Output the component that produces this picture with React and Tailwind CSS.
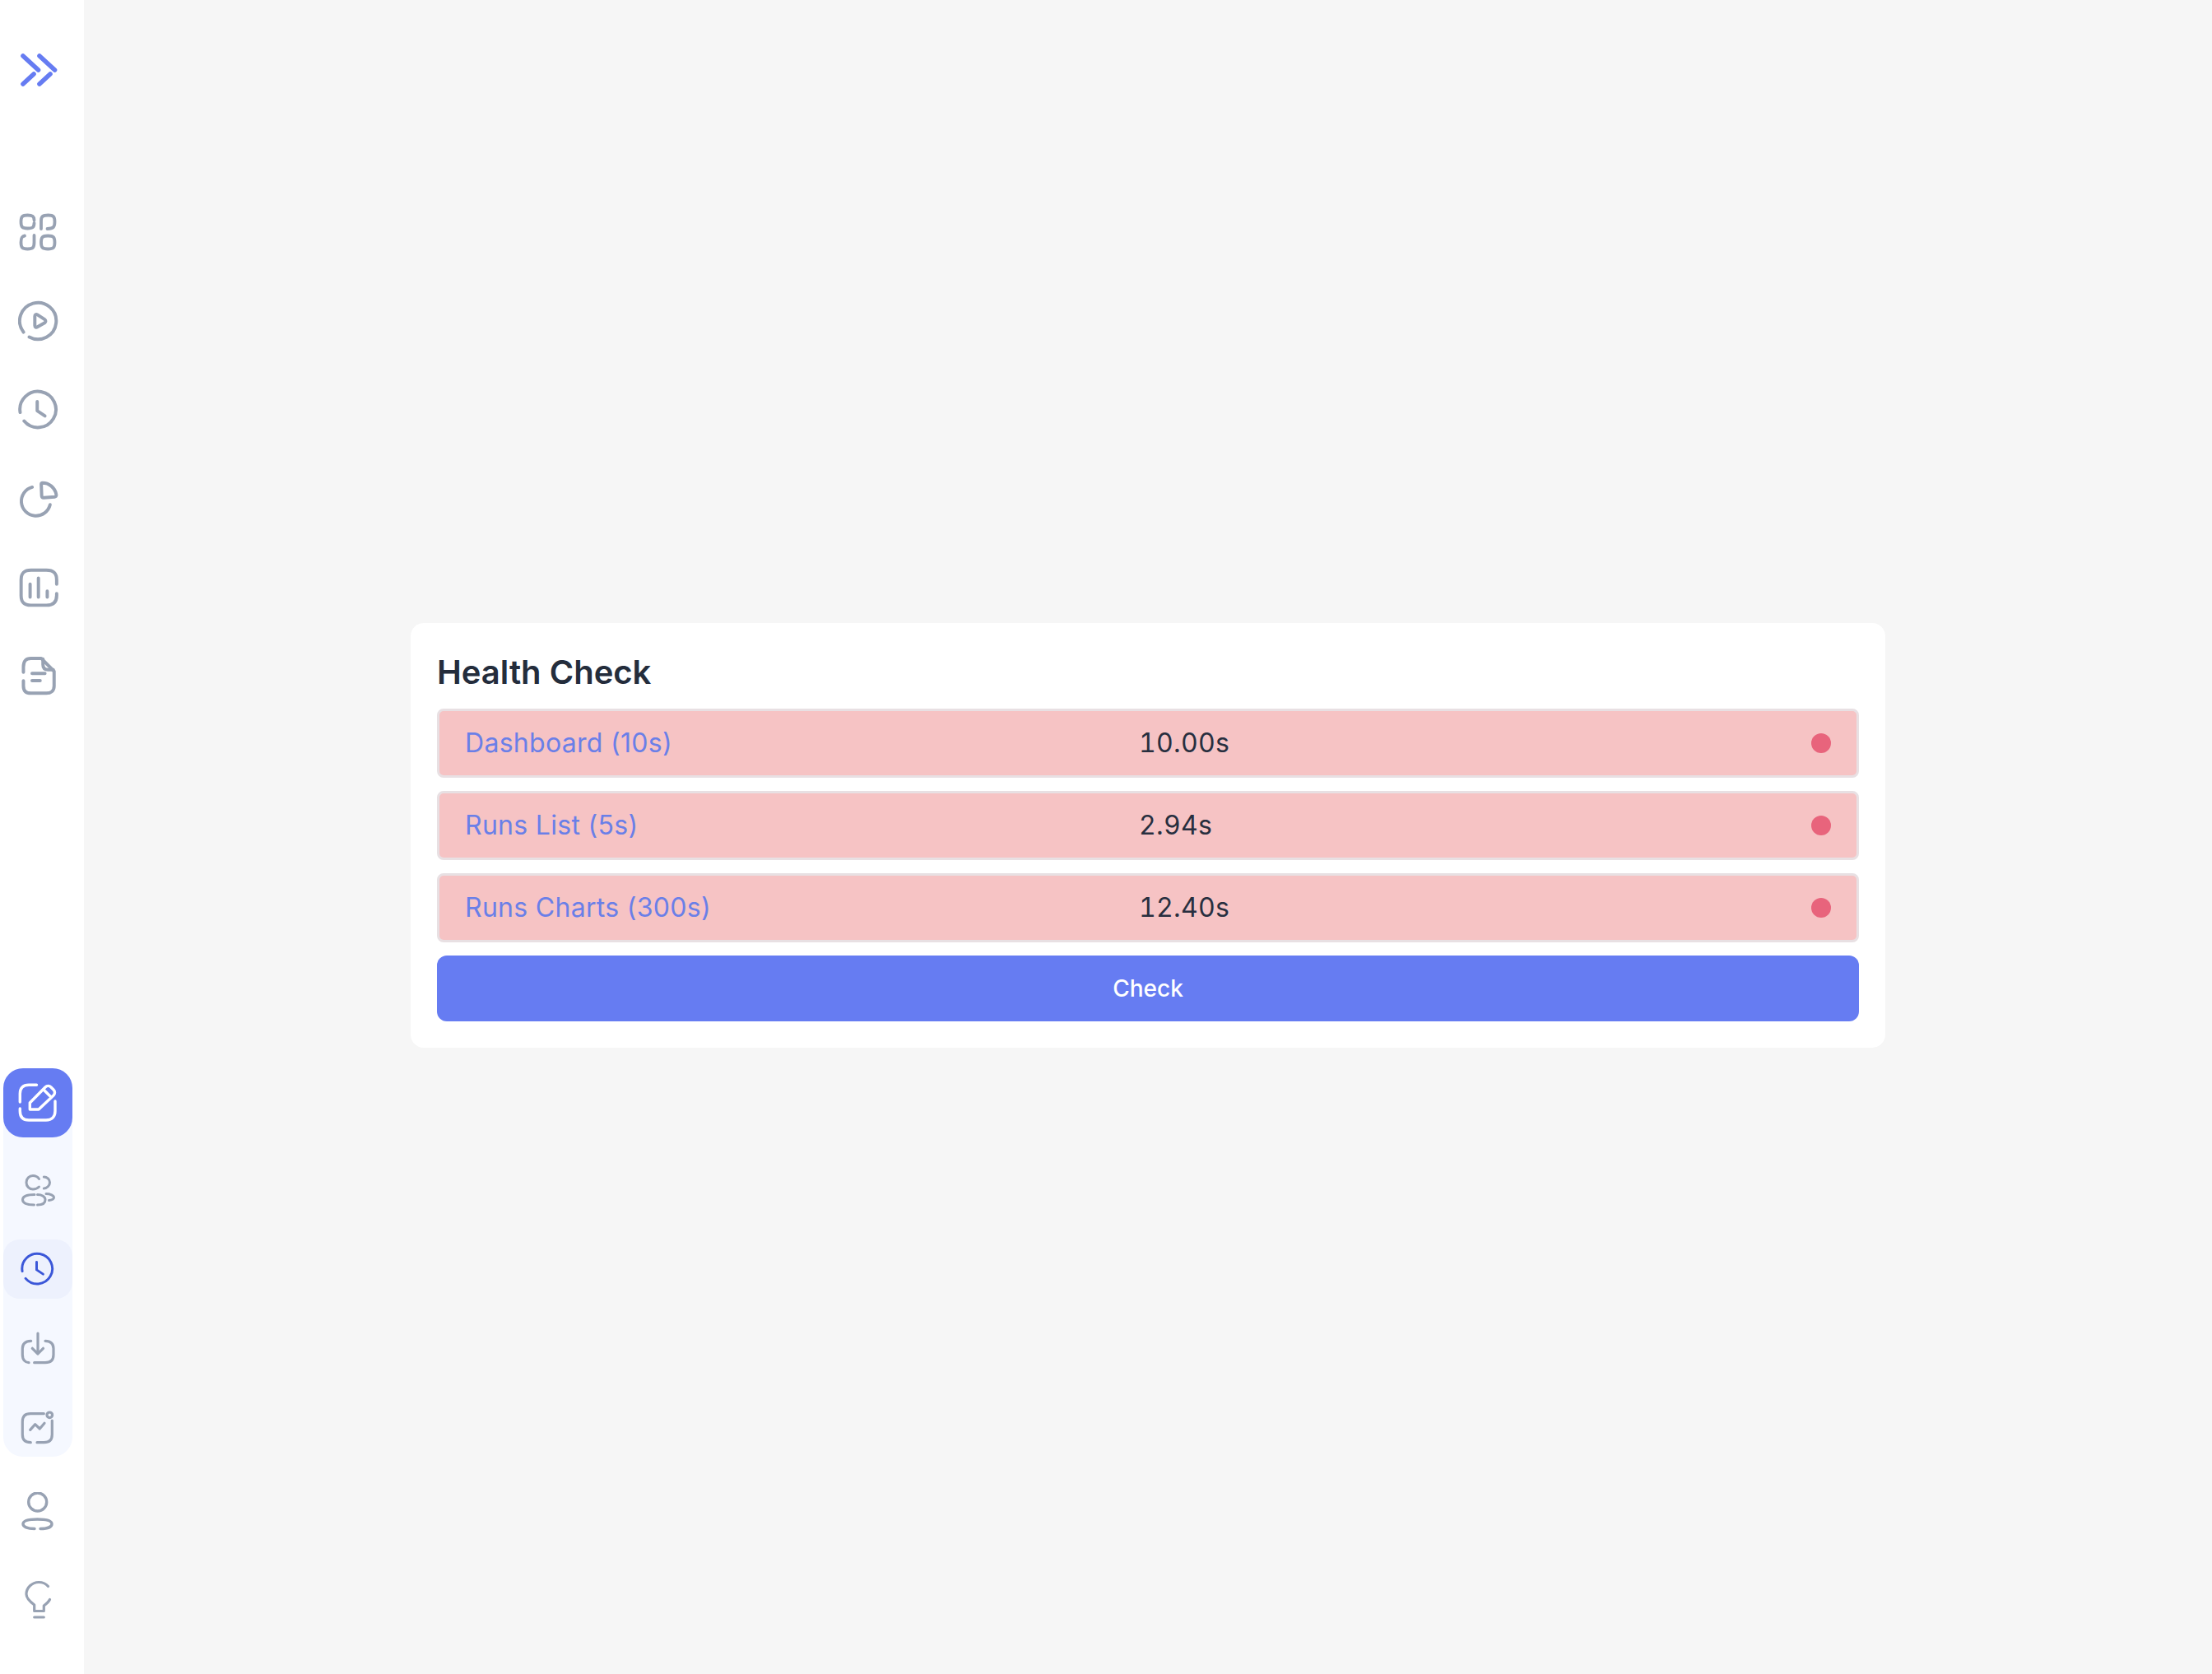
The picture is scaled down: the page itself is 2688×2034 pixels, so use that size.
import React from 'react';

const Icon = ({ className = 'text-[#98a2b3]', size = 'w-12 h-12', width = 3.8, children }) => (
  <svg
    viewBox="0 0 48 48"
    fill="none"
    stroke="currentColor"
    strokeWidth={width}
    strokeLinecap="round"
    strokeLinejoin="round"
    className={`${size} block ${className}`}
  >
    {children}
  </svg>
);

const Chevrons = () => (
  <Icon className="text-[#667cf2]" width={5.6}>
    <path d="M6 7L24.5 24M19 29L6 41" />
    <path d="M26 7L44.5 24M39 29L26 41" />
  </Icon>
);

const GridIcon = () => (
  <Icon>
    <path d="M19.5 9.5C19.5 5 17.5 3.5 11.5 3.5C5 3.5 3.5 5 3.5 11.5C3.5 18 5 19.5 11.5 19.5C18 19.5 19.5 18 19.5 13" />
    <path d="M28 20V10C28 5 30 3.5 36.5 3.5C43 3.5 44.5 5 44.5 11.5C44.5 18 43 19.5 35.5 20" />
    <path d="M8 28.5C4.5 29 3.5 31 3.5 36.5C3.5 43 5 44.5 11.5 44.5C18 44.5 19.5 43 19.5 36.5V28" />
    <path d="M28 36.5C28 30 29.5 28.5 36.2 28.5C43 28.5 44.5 30 44.5 36.5C44.5 43 43 44.5 36.2 44.5C29.5 44.5 28 43 28 36.5Z" />
  </Icon>
);

const PlayIcon = () => (
  <Icon size="w-[50px] h-[50px]">
    <path d="M13 42.7A21.3 21.3 0 1 0 6.3 37" />
    <path d="M19.5 18.5C19.5 16.5 21 15.8 22.5 16.7L31 22.2C32.5 23.3 32.5 25.2 31 26.2L22.5 31C21 32 19.5 31 19.5 29.3Z" />
  </Icon>
);

const ClockIcon = ({ className, size = 'w-[50px] h-[50px]', width }) => (
  <Icon className={className} size={size} width={width}>
    <path d="M7 37A21 21 0 1 0 2.4 27" />
    <path d="M22.3 14.3V25L31.3 31" />
  </Icon>
);

const PieIcon = () => (
  <Icon size="w-[50px] h-[50px]">
    <path d="M16.5 10.5A17 17 0 1 0 37.3 31" />
    <path d="M28.5 5.5C36 5.5 43 11 44.5 19C45 21 44 21.5 42.5 21.8L30 22.8C28 23 27.5 22 27.5 20.5L27 7C27 6 27.5 5.5 28.5 5.5Z" />
  </Icon>
);

const BarsIcon = () => (
  <Icon size="w-[50px] h-[50px]">
    <path d="M45 20V15C45 7 41 3.5 33 3.5H15C7 3.5 3.5 7 3.5 15V33C3.5 41 7 44.5 15 44.5H33C41 44.5 45 41 45 33V31" />
    <path d="M14 20V35M23.7 13V35M34 28V35" />
  </Icon>
);

const DocIcon = () => (
  <Icon size="w-[50px] h-[50px]">
    <path d="M6.2 19V13C6.2 6 9 2.8 15 2.8H27L42 18V35C42 41 38 43.5 33 43.5H15C9 43.5 6.2 41 6.2 35V29" />
    <path d="M29 3.5V10C29 14 31 16 35 16H41" />
    <path d="M16.3 20.3H31.3M16.3 28.7H25.7" />
  </Icon>
);

const EditIcon = () => (
  <Icon className="text-white" width={3.4}>
    <path d="M22.5 2.3H13C6 2.3 2.3 6 2.3 13V23" />
    <path d="M2.3 31V34C2.3 41 6 45 13 45H34C41 45 45 41 45 34V22" />
    <path d="M14.3 32V24L33 5C35 3 38 3 40 5L43 8C45 10 45 13 43 15L25 32Z" />
    <path d="M31 8L39.5 16.5" />
  </Icon>
);

const UsersIcon = () => (
  <Icon width={3}>
    <g transform="translate(0 -2)">
      <path d="M25.5 12.5C23.5 9.5 21 8.5 18 8.5C13.5 8.5 10 12 10 16.7C10 21.5 13.5 25 18 25C21 25 23.5 24 25.5 22" />
      <path d="M31.3 10C35 10 38.5 13 38.5 16.7C38.5 20.5 35 24 31.3 24" />
      <path d="M20 31.5C10.5 31.5 5.5 34 5.5 37.7C5.5 41.5 10.5 43.8 19.5 44" />
      <path d="M23.5 44C31 44 33 41.5 33 37.7C33 34 29 31.5 23.5 31.5" />
      <path d="M34 30.5C39 30.5 43.5 32.5 43.5 35C43.5 37 41 38 37.5 38.5" />
    </g>
  </Icon>
);

const DownloadIcon = () => (
  <Icon width={3.2}>
    <path d="M15.7 15.3C9 15.5 5.3 18 5.3 24.5V32C5.3 38.5 9 41.7 13 41.7" />
    <path d="M19.7 41.7H33C39.5 41.7 43 38.5 43 32V24.5C43 18 39.5 15.5 33 15.3" />
    <path d="M24 6V31M17.3 24.3L24 31L30.5 24.3" />
  </Icon>
);

const ChartIcon = () => (
  <Icon width={3.2}>
    <path d="M31.3 7.7H15C8.5 7.7 5.3 11 5.3 17.5V33C5.3 39.5 9 42.7 15.3 42.7" />
    <path d="M23 42.7H31.5C38 42.7 41.3 39.5 41.3 33V16" />
    <circle cx="38.3" cy="9.3" r="3.3" />
    <path d="M14.7 27.3L20.7 20.7L26.3 26L32 19.3" />
  </Icon>
);

const UserIcon = () => (
  <Icon width={3.4}>
    <circle cx="23.7" cy="12" r="11" />
    <path d="M20 44.5C11 44.5 6 42 6 38.7C6 35 11 33 23.5 33C36 33 41 35 41 38.7C41 42 36 44.5 27 44.5" />
  </Icon>
);

const BulbIcon = () => (
  <Icon width={3.2}>
    <path d="M36.5 8.5C33.5 4.8 29 3.5 25 3.5C17 3.5 10 10 10 18C10 23.5 15 27.5 19.7 31V38.5H31.3V32C34 30 37 27.5 38.5 24.5" />
    <path d="M19.7 46H31.3" />
  </Icon>
);

const rows = [
  { name: 'Dashboard (10s)', time: '10.00s' },
  { name: 'Runs List (5s)', time: '2.94s' },
  { name: 'Runs Charts (300s)', time: '12.40s' },
];

const navTop = [GridIcon, PlayIcon, ClockIcon, PieIcon, BarsIcon, DocIcon];

const App = () => {
  return (
    <div className="flex w-full h-[2034px] bg-[#f6f6f6] font-['Inter',sans-serif]">
      {/* Sidebar */}
      <aside className="w-[102px] shrink-0 bg-white flex flex-col justify-between">
        <div>
          <div className="pt-[61px] pl-[22px]">
            <Chevrons />
          </div>
          <nav className="mt-[119px]">
            {navTop.map((Item, i) => (
              <div key={i} className="h-[108px] flex items-center pl-[22px]">
                <Item />
              </div>
            ))}
          </nav>
        </div>
        <div className="pb-[38px]">
          <div className="ml-[4px] w-[84px] bg-[#f5f8ff] rounded-[24px] flex flex-col gap-6">
            <div className="h-[84px] mb-[4px] rounded-[24px] bg-[#667cf2] flex items-center pl-[18px]">
              <EditIcon />
            </div>
            <div className="h-[72px] flex items-center pl-[18px]">
              <UsersIcon />
            </div>
            <div className="h-[72px] rounded-[20px] bg-[#edf1fd] flex items-center pl-[21px]">
              <ClockIcon className="text-[#3b57d8]" size="w-[42px] h-[42px]" width={3.4} />
            </div>
            <div className="h-[72px] flex items-center pl-[18px]">
              <DownloadIcon />
            </div>
            <div className="h-[72px] flex items-center pl-[18px]">
              <ChartIcon />
            </div>
          </div>
          <div className="h-[106px] mt-[14px] flex items-center pl-[22px]">
            <UserIcon />
          </div>
          <div className="h-[106px] flex items-center pl-[22px]">
            <BulbIcon />
          </div>
        </div>
      </aside>

      {/* Main */}
      <main className="flex-1 flex items-center justify-center pb-[4px]">
        <section className="w-[1792px] bg-white rounded-[16px] p-8">
          <h2 className="text-[40px] leading-[56px] font-semibold text-[#242d3c] mb-4">Health Check</h2>
          <div className="flex flex-col gap-4">
            {rows.map((row) => (
              <div
                key={row.name}
                className="h-[84px] flex items-center border-[3px] border-[#e8e0e3] rounded-lg bg-[#f6c3c4] pl-[31px] pr-[31px] text-[32px] tracking-[0.3px]"
              >
                <span className="w-[819px] text-[#6a7fe8]">{row.name}</span>
                <span className="text-[#282f3f] tabular-nums">{row.time}</span>
                <span className="ml-auto w-6 h-6 rounded-full bg-[#e8647c]" />
              </div>
            ))}
            <button className="h-20 rounded-xl bg-[#667cf2] text-white text-[28px] font-medium">Check</button>
          </div>
        </section>
      </main>
    </div>
  );
};

export default App;
